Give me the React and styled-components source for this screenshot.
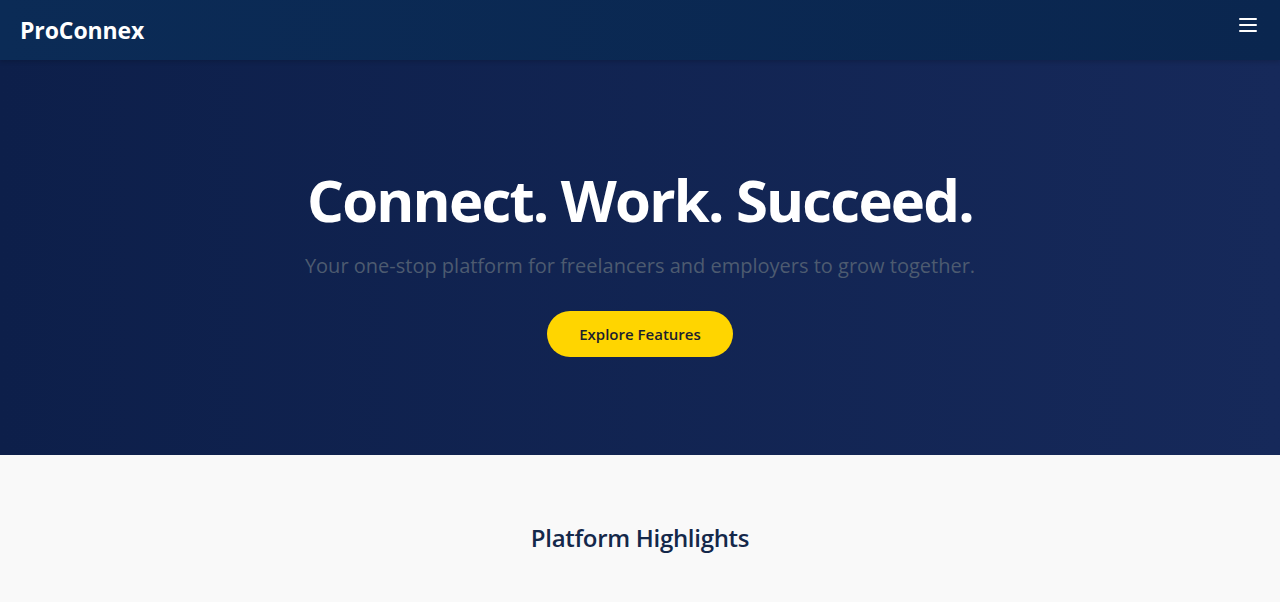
import styled, { createGlobalStyle } from "styled-components";

const GlobalStyle = createGlobalStyle`
    * { box-sizing: border-box; }
    body {
        margin: 0;
        font-family: "Open Sans", "Noto Sans", "Liberation Sans", sans-serif;
        background: #f9f9f9;
    }
`

export default function App() {
    return (
        <>
            <GlobalStyle />
            <Header>
                <Logo>ProConnex</Logo>
                <MenuButton aria-label="menu">
                    <svg width="20" height="16" viewBox="0 0 20 16">
                        <rect x="1" y="1" width="18" height="2" rx="1" fill="#ffffff" />
                        <rect x="1" y="7" width="18" height="2" rx="1" fill="#ffffff" />
                        <rect x="1" y="13" width="18" height="2" rx="1" fill="#ffffff" />
                    </svg>
                </MenuButton>
            </Header>
            <Hero>
                <Title>Connect. Work. Succeed.</Title>
                <Subtitle>Your one-stop platform for freelancers and employers to grow together.</Subtitle>
                <CTA>Explore Features</CTA>
            </Hero>
            <Highlights>
                <SectionTitle>Platform Highlights</SectionTitle>
            </Highlights>
        </>
    );
}

const Header = styled.header`
    height: 60px;
    display: flex;
    align-items: center;
    justify-content: space-between;
    padding: 0 22px 0 20px;
    background: linear-gradient(90deg, #0b2b56, #0a264f);
    box-shadow: 0 2px 4px rgba(0, 0, 0, 0.15);
    position: relative;
    z-index: 1;
`
const Logo = styled.div`
    color: #ffffff;
    font-size: 23px;
    font-weight: 700;
    letter-spacing: -0.1px;
`
const MenuButton = styled.button`
    background: none;
    border: none;
    padding: 0;
    margin-top: -10px;
    display: flex;
    cursor: pointer;
`
const Hero = styled.section`
    height: 395px;
    display: flex;
    flex-direction: column;
    align-items: center;
    padding-top: 102px;
    background: linear-gradient(90deg, #0d1f4a, #16295a);
`
const Title = styled.h1`
    margin: 0;
    color: #ffffff;
    font-size: 58px;
    font-weight: 700;
    line-height: 76px;
    letter-spacing: -1.8px;
`
const Subtitle = styled.p`
    margin: 14px 0 0;
    color: #4d5b70;
    font-size: 20px;
    line-height: 28px;
    font-weight: 400;
`
const CTA = styled.button`
    margin-top: 31px;
    height: 46px;
    padding: 0 32px;
    border: none;
    border-radius: 23px;
    background: #ffd500;
    color: #1c1f2e;
    font-family: inherit;
    font-size: 15px;
    font-weight: 600;
    cursor: pointer;
`
const Highlights = styled.section`
    background: #f9f9f9;
    padding: 66px 20px 40px;
    display: flex;
    justify-content: center;
`
const SectionTitle = styled.h2`
    margin: 0;
    color: #14284a;
    font-size: 24px;
    font-weight: 600;
    line-height: 34px;
    letter-spacing: -0.3px;
`
